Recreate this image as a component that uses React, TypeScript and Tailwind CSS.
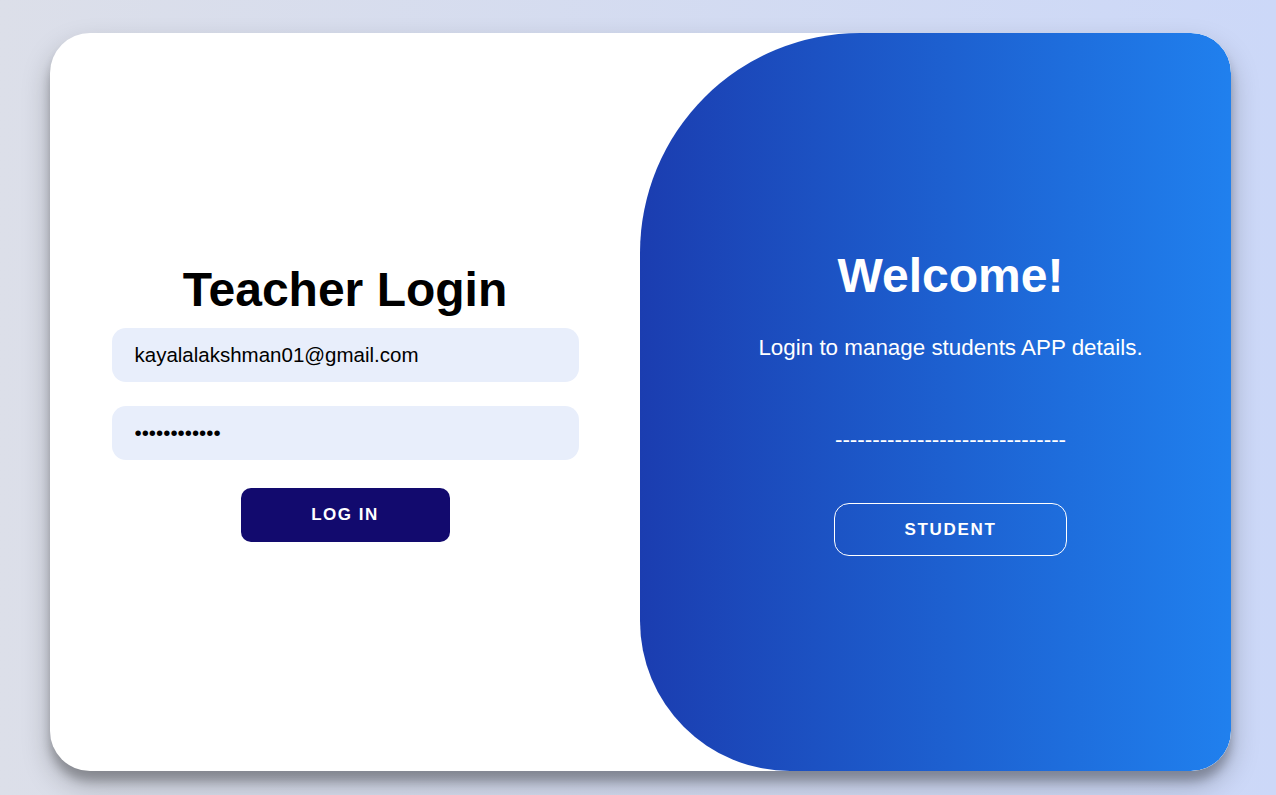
import React from "react";

export default function App() {
  return (
    <div className="min-h-screen w-full bg-gradient-to-r from-[#dcdfe9] to-[#ccd8f8] pt-[33px] pl-[50px] font-['Liberation_Sans',Arial,sans-serif]">
      <div className="w-[1181px] h-[738px] rounded-[40px] bg-white shadow-[0_14px_28px_rgba(0,0,0,0.25),0_10px_10px_rgba(0,0,0,0.22)] overflow-hidden flex">
        <div className="w-[590px] flex flex-col items-center justify-center">
          <h1 className="text-[48px] font-bold leading-[normal] text-black">Teacher Login</h1>
          <input
            readOnly
            defaultValue="kayalalakshman01@gmail.com"
            className="mt-[11px] w-[467px] h-[54px] rounded-[14px] bg-[#e8eefb] px-[23px] text-[20.5px] text-black outline-none"
          />
          <input
            readOnly
            type="password"
            defaultValue="abcdefghijkl"
            className="mt-[24px] w-[467px] h-[54px] rounded-[14px] bg-[#e8eefb] px-[23px] text-[20.5px] text-black outline-none"
          />
          <button className="mt-[28px] w-[209px] h-[54px] rounded-[10px] bg-[#120a6e] text-white font-bold text-[17px] tracking-[1.5px] leading-[normal]">
            LOG IN
          </button>
        </div>
        <div className="flex-1 rounded-[220px_40px_40px_150px] bg-gradient-to-r from-[#1b3db0] to-[#2080ee] flex flex-col items-center justify-center pl-[30px] text-white">
          <h1 className="text-[48px] font-bold leading-[normal]">Welcome!</h1>
          <p className="mt-[32px] text-[22.4px] leading-[normal]">Login to manage students APP details.</p>
          <p className="mt-[66px] text-[22.4px] leading-[normal]">-------------------------------</p>
          <button className="mt-[50px] w-[233px] h-[53px] rounded-[15px] border border-white text-white font-bold text-[17px] tracking-[1.7px] leading-[normal]">
            STUDENT
          </button>
        </div>
      </div>
    </div>
  );
}
